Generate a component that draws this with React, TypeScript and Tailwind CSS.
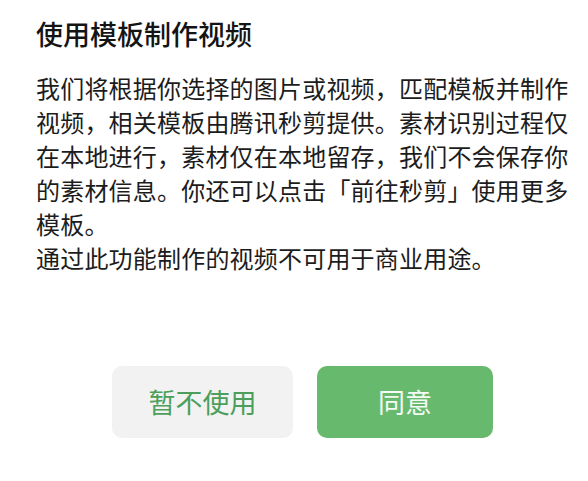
import React from "react";

const lines = [
  "我们将根据你选择的图片或视频，匹配模板并制作",
  "视频，相关模板由腾讯秒剪提供。素材识别过程仅",
  "在本地进行，素材仅在本地留存，我们不会保存你",
  "的素材信息。你还可以点击「前往秒剪」使用更多",
  "模板。",
  "通过此功能制作的视频不可用于商业用途。",
];

export default function App() {
  return (
    <div
      className="w-[588px] h-[481px] bg-white overflow-hidden"
      style={{ fontFamily: '"Noto Sans CJK SC", "Noto Sans", sans-serif' }}
    >
      <div className="pl-[36px] pt-[16px]">
        <h1 className="text-[27px] leading-[36px] font-medium text-[#141414]">
          使用模板制作视频
        </h1>
        <div className="mt-[19px] text-[24px] leading-[34px] tracking-[0.2px] text-[#1c1c1c]">
          {lines.map((l) => (
            <div key={l} className="whitespace-nowrap">
              {l}
            </div>
          ))}
        </div>
      </div>
      <div className="flex gap-[24px] pl-[112px] mt-[91px]">
        <button className="w-[181px] h-[72px] rounded-[10px] bg-[#f2f2f2] text-[#4b9f5a] text-[27px]">
          暂不使用
        </button>
        <button className="w-[176px] h-[72px] rounded-[10px] bg-[#66b96d] text-[#f4fbf4] text-[27px]">
          同意
        </button>
      </div>
    </div>
  );
}
